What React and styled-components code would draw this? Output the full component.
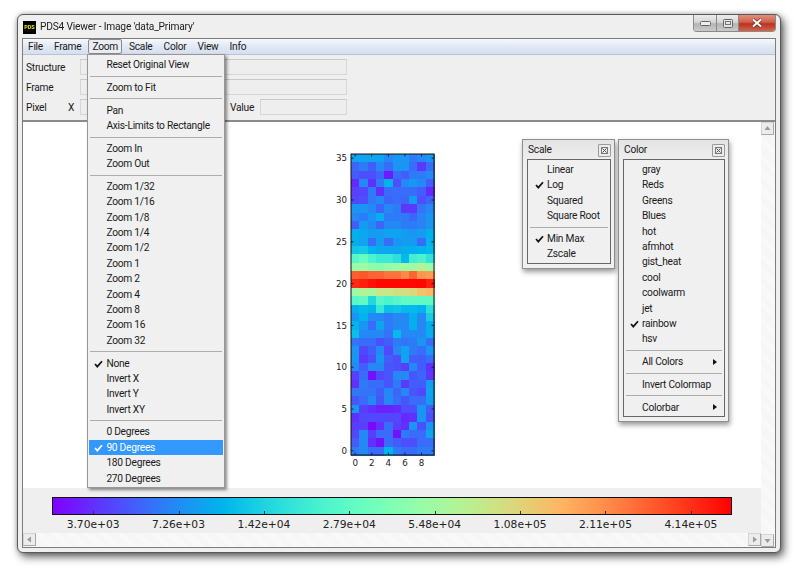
import React from 'react';
import styled, { createGlobalStyle } from 'styled-components';

const UI_FONT = `Roboto, 'Liberation Sans', Arial, sans-serif`;
const PLOT_FONT = `'DejaVu Sans', sans-serif`;

// matplotlib's rainbow colormap
const rainbow = (x) => {
  const r = Math.min(1, Math.abs(2 * x - 0.5));
  const g = Math.sin(Math.PI * x);
  const b = Math.cos((Math.PI * x) / 2);
  return `rgb(${Math.round(r * 255)},${Math.round(g * 255)},${Math.round(b * 255)})`;
};

const gradientStops = Array.from({ length: 21 }, (_, i) => rainbow(i / 20)).join(',');

// hundredths of the colormap, top row (35) down to row 0
const HEAT = [
  [22, 22, 22, 22, 18, 20, 20, 16, 18, 20],
  [13, 16, 12, 18, 14, 20, 20, 14, 7, 14],
  [12, 10, 10, 13, 3, 14, 12, 16, 16, 18],
  [5, 18, 6, 16, 25, 10, 18, 20, 18, 12],
  [8, 9, 16, 6, 14, 14, 14, 14, 12, 5],
  [9, 10, 16, 18, 13, 14, 13, 21, 10, 13],
  [20, 20, 18, 13, 18, 16, 7, 7, 15, 18],
  [18, 16, 20, 24, 16, 16, 16, 13, 17, 20],
  [12, 21, 18, 13, 18, 18, 16, 16, 17, 20],
  [24, 23, 21, 21, 22, 22, 21, 20, 21, 24],
  [24, 22, 14, 21, 14, 20, 21, 21, 14, 25],
  [28, 29, 25, 23, 23, 22, 24, 24, 25, 26],
  [42, 46, 40, 37, 37, 34, 26, 38, 40, 35],
  [55, 56, 53, 52, 54, 55, 57, 56, 60, 54],
  [88, 89, 87, 87, 85, 85, 82, 87, 80, 79],
  [95, 96, 98, 99, 99, 99, 99, 99, 99, 96],
  [55, 60, 58, 64, 64, 66, 66, 68, 72, 74],
  [42, 44, 32, 42, 40, 42, 44, 44, 44, 44],
  [24, 26, 25, 36, 27, 28, 26, 26, 25, 34],
  [20, 25, 18, 18, 16, 18, 18, 24, 18, 30],
  [25, 20, 14, 22, 16, 18, 18, 24, 18, 24],
  [27, 18, 18, 18, 15, 26, 18, 18, 18, 24],
  [15, 14, 14, 10, 12, 16, 15, 16, 20, 14],
  [20, 9, 12, 18, 9, 18, 22, 16, 14, 20],
  [20, 7, 10, 20, 12, 10, 22, 12, 12, 14],
  [18, 12, 18, 18, 11, 10, 8, 18, 12, 6],
  [8, 14, 2, 9, 11, 18, 18, 11, 13, 7],
  [6, 16, 14, 14, 11, 16, 7, 12, 12, 21],
  [15, 15, 15, 12, 18, 13, 18, 11, 9, 22],
  [11, 14, 18, 11, 18, 14, 11, 14, 14, 21],
  [20, 8, 6, 4, 4, 5, 10, 10, 20, 12],
  [6, 9, 9, 9, 9, 9, 5, 6, 20, 10],
  [8, 8, 1, 6, 14, 8, 6, 20, 10, 20],
  [9, 18, 8, 14, 14, 2, 16, 14, 14, 22],
  [12, 18, 6, 2, 14, 12, 10, 10, 14, 14],
  [16, 18, 14, 14, 25, 16, 14, 14, 16, 16],
];

const MENU_BAR = ['File', 'Frame', 'Zoom', 'Scale', 'Color', 'View', 'Info'];

const ZOOM_MENU = [
  ['Reset Original View'],
  ['Zoom to Fit'],
  ['Pan', 'Axis-Limits to Rectangle'],
  ['Zoom In', 'Zoom Out'],
  ['Zoom 1/32', 'Zoom 1/16', 'Zoom 1/8', 'Zoom 1/4', 'Zoom 1/2', 'Zoom 1', 'Zoom 2', 'Zoom 4', 'Zoom 8', 'Zoom 16', 'Zoom 32'],
  ['None', 'Invert X', 'Invert Y', 'Invert XY'],
  ['0 Degrees', '90 Degrees', '180 Degrees', '270 Degrees'],
];
const ZOOM_CHECKED = ['None', '90 Degrees'];

const SCALE_MENU = [
  ['Linear', 'Log', 'Squared', 'Square Root'],
  ['Min Max', 'Zscale'],
];
const SCALE_CHECKED = ['Log', 'Min Max'];

const COLOR_MENU = [
  ['gray', 'Reds', 'Greens', 'Blues', 'hot', 'afmhot', 'gist_heat', 'cool', 'coolwarm', 'jet', 'rainbow', 'hsv'],
  ['All Colors'],
  ['Invert Colormap'],
  ['Colorbar'],
];
const COLOR_CHECKED = ['rainbow'];
const SUBMENUS = ['All Colors', 'Colorbar'];

const TICKS = ['3.70e+03', '7.26e+03', '1.42e+04', '2.79e+04', '5.48e+04', '1.08e+05', '2.11e+05', '4.14e+05'];

const GlobalStyle = createGlobalStyle`
  html, body {
    margin: 0;
    background: #fff;
  }
`;

const Page = styled.div`
  width: 800px;
  height: 568px;
  box-sizing: border-box;
  padding: 14px 19px 15px 17px;
  overflow: hidden;
  font-family: ${UI_FONT};
  font-size: 10.2px;
  letter-spacing: -0.25px;
  color: #1a1a1a;
  filter: blur(0.3px);
`;

const Window = styled.div`
  height: 100%;
  box-sizing: border-box;
  display: flex;
  flex-direction: column;
  padding: 0 4px 4px;
  background: #efefef;
  border: 1px solid #5a5a5a;
  border-radius: 6px;
  box-shadow: 3px 4px 8px rgba(0, 0, 0, 0.6), 0 0 5px rgba(0, 0, 0, 0.25);
`;

const TitleBar = styled.div`
  height: 23px;
  flex: none;
  display: flex;
  align-items: center;
  gap: 4px;
  padding-left: 1px;
  letter-spacing: -0.18px;
  position: relative;
`;

const AppIcon = styled.span`
  width: 13px;
  height: 13px;
  background: #000;
  color: #e6e600;
  font-size: 5.5px;
  font-weight: 700;
  line-height: 13px;
  text-align: center;
  letter-spacing: 0;
  margin-top: 2px;
`;

const Caption = styled.div`
  position: absolute;
  top: 0;
  right: 0;
  height: 16px;
  display: flex;
  border: 1px solid #8a8a8a;
  border-top: none;
  border-radius: 0 0 4px 4px;
  overflow: hidden;
`;

const CaptionButton = styled.div`
  width: ${(p) => p.$width}px;
  display: flex;
  align-items: center;
  justify-content: center;
  background: ${(p) =>
    p.$close
      ? 'linear-gradient(#e0917c 0%, #cf5f4a 45%, #b8331f 55%, #d2644c 100%)'
      : 'linear-gradient(#ececec 0%, #d6d6d6 45%, #b4b4b4 55%, #cacaca 100%)'};
  & + & {
    border-left: 1px solid #8a8a8a;
  }
`;

const Content = styled.div`
  flex: 1;
  min-height: 0;
  display: flex;
  flex-direction: column;
  border: 1px solid #7d7d7d;
  background: #efefef;
`;

const MenuBar = styled.div`
  height: 15px;
  flex: none;
  display: flex;
  gap: 3px;
  padding-left: 1px;
  background: linear-gradient(#f6f8fb 0%, #dfe7f4 55%, #d5dfef 100%);
  border-bottom: 1px solid #b9c3d3;
  position: relative;
  z-index: 5;
`;

const MenuTitle = styled.div`
  position: relative;
  box-sizing: border-box;
  height: 15px;
  line-height: 13px;
  padding: 0 3px;
  border: 1px solid ${(p) => (p.$open ? '#8b8b8b' : 'transparent')};
  border-radius: 2px;
  background: ${(p) => (p.$open ? '#e9edf3' : 'transparent')};
`;

const DropMenu = styled.div`
  position: absolute;
  top: 14px;
  left: -2px;
  width: 138px;
  height: 434px;
  box-sizing: border-box;
  padding: 2px 1px;
  background: #f0f0f0;
  border: 1px solid #979797;
  box-shadow: 2px 2px 3px rgba(0, 0, 0, 0.45);
`;

const MenuRow = styled.div`
  position: relative;
  height: 15.4px;
  line-height: 15.4px;
  padding-left: ${(p) => p.$indent}px;
  white-space: nowrap;
  color: ${(p) => (p.$active ? '#fff' : '#1a1a1a')};
  background: ${(p) => (p.$active ? '#3399ff' : 'transparent')};
`;

const Separator = styled.div`
  height: 1px;
  margin: 3.2px 1px;
  background: #adadad;
`;

const CheckSlot = styled.svg`
  position: absolute;
  top: 4px;
  left: ${(p) => p.$left}px;
`;

const ArrowSlot = styled.span`
  position: absolute;
  top: 4.5px;
  right: 6px;
  border-left: 4px solid #111;
  border-top: 3px solid transparent;
  border-bottom: 3px solid transparent;
`;

const InfoPanel = styled.div`
  height: 67px;
  flex: none;
  box-sizing: border-box;
  display: flex;
  flex-direction: column;
  gap: 4px;
  padding: 4px 0 0 3px;
  border-bottom: 2px solid #8a8a8a;
`;

const InfoRow = styled.div`
  height: 16px;
  display: flex;
  align-items: center;
`;

const FieldLabel = styled.span`
  flex: none;
  width: ${(p) => p.$width}px;
`;

const Field = styled.div`
  flex: none;
  width: ${(p) => p.$width}px;
  height: 16px;
  box-sizing: border-box;
  background: #eeeeee;
  border: 1px solid #d6d6d6;
  border-top-color: #c8c8c8;
`;

const Main = styled.div`
  flex: 1;
  min-height: 0;
  display: grid;
  grid-template-columns: 1fr 14px;
  grid-template-rows: 1fr 14px;
`;

const PlotColumn = styled.div`
  min-width: 0;
  display: flex;
  flex-direction: column;
`;

const Canvas = styled.div`
  flex: 1;
  position: relative;
  display: flex;
  justify-content: center;
  padding-top: 26px;
  background: #fff;
  letter-spacing: normal;
`;

const FloatingWindow = styled.div`
  position: absolute;
  top: 17px;
  left: ${(p) => p.$left}px;
  width: ${(p) => p.$width}px;
  box-sizing: border-box;
  padding: 0 3px 4px 4px;
  background: linear-gradient(#e4e4e4, #f0f0f0 24px);
  border: 1px solid #8f8f8f;
  box-shadow: 1px 3px 5px rgba(0, 0, 0, 0.4);
  letter-spacing: -0.25px;
`;

const FloatingHeader = styled.div`
  height: 19px;
  display: flex;
  align-items: center;
  justify-content: space-between;
  padding: 0 0 0 1px;
`;

const CloseBox = styled.div`
  width: 13px;
  height: 13px;
  box-sizing: border-box;
  display: flex;
  align-items: center;
  justify-content: center;
  border: 1px solid #9a9a9a;
  border-radius: 1px;
  background: #ececec;
  margin-top: 1px;
`;

const FloatingBody = styled.div`
  border: 1px solid #666;
  padding: 2px 1px 1px;
  background: #f0f0f0;
`;

const ColorbarStrip = styled.div`
  height: 45px;
  flex: none;
  box-sizing: border-box;
  padding: 9px 29px 0;
  background: #efefef;
  letter-spacing: normal;
`;

const ColorbarBar = styled.div`
  height: 18px;
  box-sizing: border-box;
  border: 1px solid #111;
  background: linear-gradient(to right, ${gradientStops});
`;

const TickGrid = styled.div`
  display: grid;
  grid-template-columns: repeat(8, 85.4px);
  justify-content: center;
  height: 100%;
`;

const Tick = styled.div`
  position: relative;
  &::after {
    content: '';
    position: absolute;
    left: 50%;
    bottom: 0;
    width: 1px;
    height: 3px;
    background: #333;
  }
`;

const TickLabels = styled.div`
  display: grid;
  grid-template-columns: repeat(8, 85.4px);
  justify-content: center;
  margin-top: 3px;
  font-family: ${PLOT_FONT};
  font-size: 10.7px;
  line-height: 13px;
  text-align: center;
  color: #222;
`;

const ScrollBar = styled.div`
  display: flex;
  flex-direction: ${(p) => (p.$vertical ? 'column' : 'row')};
  justify-content: space-between;
  background: repeating-linear-gradient(45deg, #f4f4f4 0 1px, #fbfbfb 1px 2px);
  ${(p) => p.$vertical && 'grid-row: 1 / span 2; grid-column: 2;'}
`;

const ScrollButton = styled.div`
  width: 13px;
  height: 13px;
  flex: none;
  display: flex;
  align-items: center;
  justify-content: center;
  background: #ececec;
  border: 1px solid #d4d4d4;
  border-right-color: #a8a8a8;
  border-bottom-color: #a8a8a8;
  box-sizing: border-box;
`;

const CheckMark = ({ left, color }) => (
  <CheckSlot $left={left} width="9" height="8" viewBox="0 0 9 8">
    <path d="M1 4 L3.3 6.6 L8 1.2" fill="none" stroke={color} strokeWidth="1.7" />
  </CheckSlot>
);

const MenuGroups = ({ groups, checked, active, indent, checkLeft }) =>
  groups.map((group, i) => (
    <React.Fragment key={group[0]}>
      {i > 0 && <Separator />}
      {group.map((label) => (
        <MenuRow key={label} $indent={indent} $active={label === active}>
          {checked.includes(label) && <CheckMark left={checkLeft} color={label === active ? '#fff' : '#111'} />}
          {label}
          {SUBMENUS.includes(label) && <ArrowSlot />}
        </MenuRow>
      ))}
    </React.Fragment>
  ));

const Arrow = ({ points }) => (
  <svg width="7" height="7" viewBox="0 0 7 7">
    <polygon points={points} fill="#9a9a9a" />
  </svg>
);

const Heatmap = () => {
  const left = 29;
  const top = 6;
  const cellW = 8.3;
  const cellH = 301 / 36;
  const yTicks = [0, 5, 10, 15, 20, 25, 30, 35];
  const xTicks = [0, 2, 4, 6, 8];
  const bottom = top + cellH * 36;
  const right = left + cellW * 10;
  return (
    <svg width="140" height="326" viewBox="0 0 140 326" fontFamily="'DejaVu Sans', sans-serif" fontSize="8.7" fill="#222">
      <g shapeRendering="crispEdges">
        {HEAT.map((row, r) =>
          row.map((value, c) => (
            <rect
              key={`${r}-${c}`}
              x={left + c * cellW}
              y={top + r * cellH}
              width={cellW + 0.5}
              height={cellH + 0.5}
              fill={rainbow(value / 100)}
            />
          )),
        )}
      </g>
      <rect x={left} y={top} width={cellW * 10} height={cellH * 36} fill="none" stroke="#111" />
      {yTicks.map((t) => {
        const y = bottom - (t + 0.5) * cellH;
        return (
          <g key={t}>
            <path d={`M${left} ${y}h2.5M${right} ${y}h-2.5`} stroke="#111" strokeWidth="0.8" />
            <text x={left - 4} y={y + 3.2} textAnchor="end">{t}</text>
          </g>
        );
      })}
      {xTicks.map((t) => {
        const x = left + (t + 0.5) * cellW;
        return (
          <g key={t}>
            <path d={`M${x} ${top}v2.5M${x} ${bottom}v-2.5`} stroke="#111" strokeWidth="0.8" />
            <text x={x} y={bottom + 11} textAnchor="middle">{t}</text>
          </g>
        );
      })}
    </svg>
  );
};

const CloseIcon = () => (
  <svg width="7" height="7" viewBox="0 0 7 7">
    <rect x="0.5" y="0.5" width="6" height="6" fill="none" stroke="#777" />
    <path d="M1.5 1.5L5.5 5.5M5.5 1.5L1.5 5.5" stroke="#555" />
  </svg>
);

const App = () => (
  <Page>
    <GlobalStyle />
    <Window>
      <TitleBar>
        <AppIcon>PDS</AppIcon>
        PDS4 Viewer - Image 'data_Primary'
        <Caption>
          <CaptionButton $width={22}>
            <svg width="11" height="6" viewBox="0 0 11 6">
              <rect x="0.5" y="1.5" width="10" height="4" rx="1" fill="#eee" stroke="#666" />
            </svg>
          </CaptionButton>
          <CaptionButton $width={21}>
            <svg width="10" height="9" viewBox="0 0 10 9">
              <rect x="0.5" y="0.5" width="9" height="8" rx="1" fill="#e4e4e4" stroke="#666" />
              <rect x="2.5" y="2.5" width="5" height="3" fill="none" stroke="#777" />
            </svg>
          </CaptionButton>
          <CaptionButton $width={36} $close>
            <svg width="12" height="10" viewBox="0 0 12 10">
              <path d="M2 1.5L10 8.5M10 1.5L2 8.5" stroke="#5a2a22" strokeWidth="3.2" />
              <path d="M2 1.5L10 8.5M10 1.5L2 8.5" stroke="#fff" strokeWidth="2" />
            </svg>
          </CaptionButton>
        </Caption>
      </TitleBar>
      <Content>
        <MenuBar>
          {MENU_BAR.map((name) => (
            <MenuTitle key={name} $open={name === 'Zoom'}>
              {name}
              {name === 'Zoom' && (
                <DropMenu>
                  <MenuGroups groups={ZOOM_MENU} checked={ZOOM_CHECKED} active="90 Degrees" indent={17} checkLeft={5} />
                </DropMenu>
              )}
            </MenuTitle>
          ))}
        </MenuBar>
        <InfoPanel>
          <InfoRow>
            <FieldLabel $width={54}>Structure</FieldLabel>
            <Field $width={267} />
          </InfoRow>
          <InfoRow>
            <FieldLabel $width={54}>Frame</FieldLabel>
            <Field $width={267} />
          </InfoRow>
          <InfoRow>
            <FieldLabel $width={42}>Pixel</FieldLabel>
            <FieldLabel $width={12}>X</FieldLabel>
            <Field $width={60} />
            <FieldLabel $width={12} />
            <Field $width={66} />
            <FieldLabel $width={12} />
            <FieldLabel $width={30}>Value</FieldLabel>
            <Field $width={87} />
          </InfoRow>
        </InfoPanel>
        <Main>
          <PlotColumn>
            <Canvas>
              <Heatmap />
              <FloatingWindow $left={499} $width={93}>
                <FloatingHeader>
                  Scale
                  <CloseBox><CloseIcon /></CloseBox>
                </FloatingHeader>
                <FloatingBody>
                  <MenuGroups groups={SCALE_MENU} checked={SCALE_CHECKED} indent={18} checkLeft={6} />
                </FloatingBody>
              </FloatingWindow>
              <FloatingWindow $left={595} $width={111}>
                <FloatingHeader>
                  Color
                  <CloseBox><CloseIcon /></CloseBox>
                </FloatingHeader>
                <FloatingBody>
                  <MenuGroups groups={COLOR_MENU} checked={COLOR_CHECKED} indent={17} checkLeft={5} />
                </FloatingBody>
              </FloatingWindow>
            </Canvas>
            <ColorbarStrip>
              <ColorbarBar>
                <TickGrid>
                  {TICKS.map((t) => (
                    <Tick key={t} />
                  ))}
                </TickGrid>
              </ColorbarBar>
              <TickLabels>
                {TICKS.map((t) => (
                  <span key={t}>{t}</span>
                ))}
              </TickLabels>
            </ColorbarStrip>
          </PlotColumn>
          <ScrollBar $vertical>
            <ScrollButton><Arrow points="3.5,1 6.5,5 0.5,5" /></ScrollButton>
            <ScrollButton><Arrow points="0.5,2 6.5,2 3.5,6" /></ScrollButton>
          </ScrollBar>
          <ScrollBar>
            <ScrollButton><Arrow points="5,0.5 5,6.5 1,3.5" /></ScrollButton>
            <ScrollButton><Arrow points="2,0.5 2,6.5 6,3.5" /></ScrollButton>
          </ScrollBar>
        </Main>
      </Content>
    </Window>
  </Page>
);

export default App;
